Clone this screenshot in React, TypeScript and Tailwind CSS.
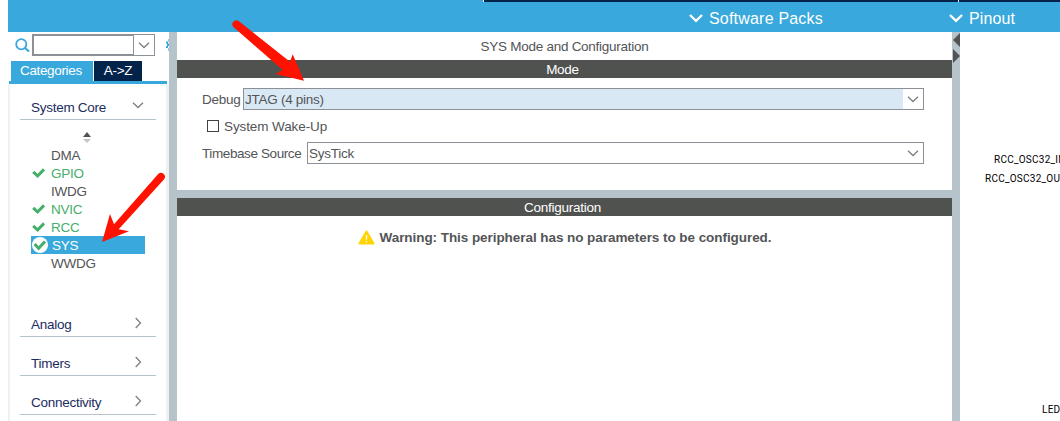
import { clsx } from "clsx";

type Peripheral = {
  name: string;
  enabled?: boolean;
  selected?: boolean;
};

const peripherals: Peripheral[] = [
  { name: "DMA" },
  { name: "GPIO", enabled: true },
  { name: "IWDG" },
  { name: "NVIC", enabled: true },
  { name: "RCC", enabled: true },
  { name: "SYS", enabled: true, selected: true },
  { name: "WWDG" },
];

const closedCategories = ["Analog", "Timers", "Connectivity"];

function ThinChevron({ className }: { className?: string }) {
  return (
    <svg viewBox="0 0 12 12" className={clsx("h-3 w-3 shrink-0", className)} fill="none" stroke="#7d7f82" strokeWidth="1.3">
      <path d="M1 3.7 L6 8.5 L11 3.7" />
    </svg>
  );
}

function MenuChevron() {
  return (
    <svg viewBox="0 0 14 10" className="h-[10px] w-[14px]" fill="none" stroke="#fff" strokeWidth="2.4">
      <path d="M1 1 L7 6.8 L13 1" />
    </svg>
  );
}

function CheckIcon({ selected }: { selected?: boolean }) {
  return (
    <svg viewBox="0 0 18 18" className="h-[18px] w-[18px] shrink-0">
      {selected && <circle cx="9" cy="9" r="8" fill="#fff" />}
      <path
        d={selected ? "M3.6 8 L7.6 12.3 L14 5.4" : "M2.2 7.8 L6.6 12 L13 5.4"}
        fill="none"
        stroke="#45ae6b"
        strokeWidth="3"
      />
    </svg>
  );
}

function TopBar() {
  return (
    <header className="ml-2 flex h-8 flex-col bg-[#39a8dc]">
      <div className="flex h-[2px] pl-[475px]">
        <div className="w-px bg-white" />
        <div className="w-[474px] bg-[#03234b]" />
        <div className="w-px bg-white" />
        <div className="flex-1 bg-[#03234b]" />
      </div>
      <div className="flex h-[30px] items-center pl-[681px] text-[16px] text-white">
        <div className="flex w-[260px] items-center gap-[6px] pt-[3px] tracking-[0.2px]">
          <MenuChevron />
          <span>Software Packs</span>
        </div>
        <div className="flex items-center gap-[6px] pt-[3px] tracking-[0.1px]">
          <MenuChevron />
          <span>Pinout</span>
        </div>
      </div>
    </header>
  );
}

function SearchRow() {
  return (
    <div className="flex h-[29px] items-start overflow-hidden pl-[7px] pt-[2px]">
      <svg viewBox="0 0 15 15" className="mt-[4px] h-[15px] w-[15px]" fill="none" stroke="#39a8dc" strokeWidth="1.8">
        <circle cx="6.3" cy="6.2" r="5.1" />
        <path d="M10 10 L14 13.5" strokeWidth="2.2" />
      </svg>
      <div className="ml-[2px] h-[22px] w-[102px] border-2 border-r border-[#8b9197] bg-white" />
      <div className="flex h-[22px] w-[21px] items-center justify-center border border-l-0 border-[#8b9197]">
        <ThinChevron />
      </div>
      <svg viewBox="0 0 3 12" className="ml-[11px] mt-[5px] h-[12px] w-[3px]" fill="#39a8dc">
        <path d="M0 2.5 H2 V4.5 H0 Z M1 4.5 H3 V7 H1 Z M0 7 H2 V9 H0 Z" />
        <path d="M2 0 H3 V3 H2 Z M2 9 H3 V12 H2 Z" opacity="0.6" />
      </svg>
    </div>
  );
}

function CategoryHeader({ label, open }: { label: string; open?: boolean }) {
  return (
    <div
      className={clsx(
        "mx-[10px] flex items-start justify-between border-b border-[#b7c3ca] pl-[11px] pr-3 text-[#1c2c5e]",
        open ? "h-[36px] pt-[14px]" : "h-[39px] pt-[17px]"
      )}
    >
      <span className="leading-[20px]">{label}</span>
      <ThinChevron className={open ? "mt-[1px]" : "mt-[2px] -rotate-90"} />
    </div>
  );
}

function Sidebar() {
  return (
    <aside className="ml-2 flex w-[161px] shrink-0 flex-col overflow-hidden">
      <SearchRow />
      <div className="flex h-5 gap-px pl-[3px] leading-[20px] text-white">
        <div className="w-[82px] bg-[#39a8dc] pl-[9px] tracking-[-0.35px]">Categories</div>
        <div className="w-[48px] bg-[#03234b] text-center">A-&gt;Z</div>
      </div>
      <div className="ml-px h-[3px] w-[158px] shrink-0 bg-[#39a8dc]" />
      <div className="flex-1 border-l-2 border-r-[3px] border-[#eff0f1]">
        <CategoryHeader label="System Core" open />
        <div className="flex h-[26px] justify-center pr-[2px] pt-[12px]">
          <svg viewBox="0 0 8 11" className="h-[11px] w-2">
            <path d="M0 5 L4 0 L8 5 Z" fill="#535353" />
            <path d="M0 7 L4 11 L8 7 Z" fill="#c6c6c6" />
          </svg>
        </div>
        <ul className="ml-[21px] w-[114px]">
          {peripherals.map((p) => (
            <li
              key={p.name}
              className={clsx(
                "flex h-[18px] items-center leading-[18px]",
                p.selected ? "gap-[3px] bg-[#39a8dc] text-white" : "gap-[2px]",
                !p.selected && (p.enabled ? "text-[#45ae6b]" : "text-[#535557]")
              )}
            >
              {p.enabled ? <CheckIcon selected={p.selected} /> : <span className="w-[18px]" />}
              <span className="pt-px">{p.name}</span>
            </li>
          ))}
        </ul>
        <div className="pt-[26px]">
          {closedCategories.map((label) => (
            <CategoryHeader key={label} label={label} />
          ))}
        </div>
      </div>
    </aside>
  );
}

function Select({ value, active }: { value: string; active?: boolean }) {
  return (
    <div className="flex h-[22px] flex-1 border border-[#8b9197]">
      <div className={clsx("h-5 flex-1 pl-px leading-[22px]", active && "bg-[#d9e8f5]")}>{value}</div>
      <div className="flex w-5 items-center justify-center">
        <ThinChevron />
      </div>
    </div>
  );
}

function SectionBar({ title }: { title: string }) {
  return <h2 className="h-[18px] bg-[#505250] pr-[4px] text-center leading-[19px] text-white">{title}</h2>;
}

function ModePanel() {
  return (
    <main className="flex w-[775px] shrink-0 flex-col">
      <h1 className="h-7 text-center leading-[30px]">SYS Mode and Configuration</h1>
      <SectionBar title="Mode" />
      <div className="flex h-[112px] flex-col pl-[25px] pr-[28px] pt-[10px]">
        <div className="flex h-[22px] items-center gap-[3px]">
          <label className="w-[38px] leading-[20px] pt-[2px]">Debug</label>
          <Select value="JTAG (4 pins)" active />
        </div>
        <div className="flex h-8 items-center gap-[5px] pl-[5px]">
          <span className="h-3 w-3 border border-[#3f4143]" />
          <label className="leading-[20px] pt-[2px] tracking-[-0.1px]">System Wake-Up</label>
        </div>
        <div className="flex h-[22px] items-center gap-[3px]">
          <label className="w-[102px] whitespace-nowrap leading-[20px] pt-[2px] tracking-[-0.4px]">Timebase Source</label>
          <Select value="SysTick" />
        </div>
      </div>
      <div className="h-2 bg-[#b7c3ca]" />
      <SectionBar title="Configuration" />
      <div className="flex h-[42px] items-center justify-center gap-[5px] font-bold tracking-[-0.06px]">
        <svg viewBox="0 0 17 15" className="h-[15px] w-[17px]">
          <path d="M8.5 1.5 L15.5 13.5 L1.5 13.5 Z" fill="#ffd400" stroke="#ffd400" strokeWidth="2" strokeLinejoin="round" />
          <path d="M8.5 5 V9.5 M8.5 11 V12.5" stroke="#fff" strokeWidth="1.3" />
        </svg>
        <span className="leading-[20px] pt-[2px]">Warning: This peripheral has no parameters to be configured.</span>
      </div>
    </main>
  );
}

function PinoutView() {
  return (
    <section className="relative flex-1 overflow-hidden whitespace-nowrap font-[Roboto,sans-serif] text-[10px] leading-[12px] tracking-[0.25px] text-black">
      <span className="absolute left-[34px] top-[122px]">RCC_OSC32_IN</span>
      <span className="absolute left-[25px] top-[141px]">RCC_OSC32_OU</span>
      <span className="absolute left-[82px] top-[372px]">LED</span>
    </section>
  );
}

// Red pointers drawn over the window
function Annotations() {
  return (
    <svg viewBox="0 0 1060 421" className="pointer-events-none absolute left-0 top-0 h-[421px] w-[1060px]" fill="#ff1200">
      <path d="M238.6 21 L290 61.7 L292.7 54.3 L304 80.7 L275.7 74 L282.7 70 L233.4 27 A4 4 0 0 1 238.6 21 Z" />
      <path d="M158.2 173.9 L114 224.3 L110 214 L102 242 L129 231.3 L118.7 229.3 L163.9 179.5 A4 4 0 0 0 158.2 173.9 Z" />
    </svg>
  );
}

export default function App() {
  return (
    <div className="relative flex h-[421px] w-[1060px] flex-col overflow-hidden bg-white font-['Liberation_Sans',Arial,sans-serif] text-[13.5px] tracking-[-0.27px] text-[#535557]">
      <TopBar />
      <div className="flex min-h-0 flex-1">
        <Sidebar />
        <div className="w-2 shrink-0 bg-[#b7c3ca]" />
        <ModePanel />
        <div className="w-2 shrink-0 bg-[#b7c3ca]">
          <svg viewBox="0 0 8 32" className="h-8 w-2" fill="#505254">
            <path d="M8 1 V15 L1 8 Z" />
            <path d="M1 17 V31 L8 24 Z" />
          </svg>
        </div>
        <PinoutView />
      </div>
      <Annotations />
    </div>
  );
}
